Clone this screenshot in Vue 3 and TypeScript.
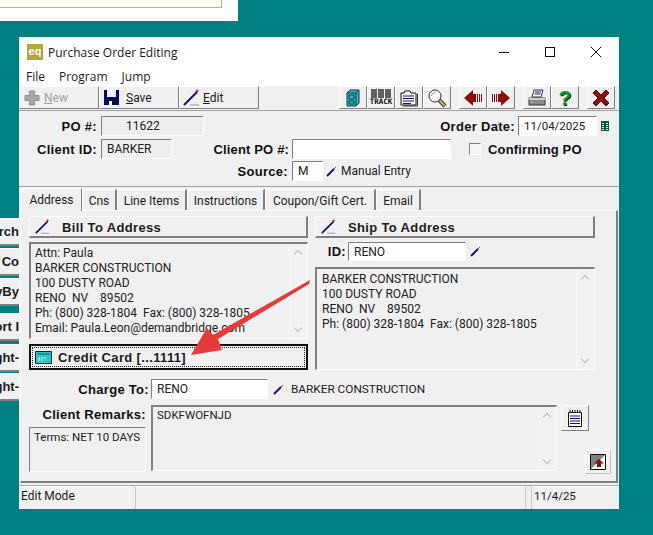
<script setup lang="ts">
const menus = ['File', 'Program', 'Jump']
const tabs = [
  { label: 'Address', width: 61 },
  { label: 'Cns', width: 35 },
  { label: 'Line Items', width: 70 },
  { label: 'Instructions', width: 78 },
  { label: 'Coupon/Gift Cert.', width: 111 },
  { label: 'Email', width: 45 },
]
const billTo = [
  'Attn: Paula',
  'BARKER CONSTRUCTION',
  '100 DUSTY ROAD',
  'RENO  NV    89502',
  'Ph: (800) 328-1804  Fax: (800) 328-1805',
  'Email: Paula.Leon@demandbridge.com',
]
const shipTo = billTo.slice(1, 5)
const sideButtons = [
  { label: 'rch', top: 218 },
  { label: '. Co', top: 248 },
  { label: 'yBy', top: 278 },
  { label: 'ort I', top: 313 },
  { label: 'ght-', top: 344 },
  { label: 'ght-', top: 373 },
]
</script>

<template>
  <div class="desktop">
    <div class="back-window"><div class="back-inner"></div></div>
    <div
      v-for="b in sideButtons"
      :key="b.top"
      class="side-btn"
      :style="{ top: b.top + 'px' }"
    ><span>{{ b.label }}</span></div>

    <div class="window">
      <div class="titlebar">
        <span class="app-icon">eq</span>
        <span class="title">Purchase Order Editing</span>
        <div class="win-controls">
          <svg width="12" height="12" viewBox="0 0 12 12"><path d="M1 6.500h10" stroke="#111" fill="none" /></svg>
          <svg width="12" height="12" viewBox="0 0 12 12"><rect x="1.500" y="1.500" width="9" height="9" stroke="#111" fill="none" /></svg>
          <svg width="12" height="12" viewBox="0 0 12 12"><path d="M1 1l10 10M11 1L1 11" stroke="#111" fill="none" /></svg>
        </div>
      </div>
      <div class="menubar">
        <span v-for="m in menus" :key="m">{{ m }}</span>
      </div>

      <div class="toolbar">
        <button class="tool wide disabled new-btn">
          <svg width="18" height="18" viewBox="0 0 18 18"><path d="M6.500 2h5v4.500H16v5h-4.500V16h-5v-4.500H2v-5h4.500z" fill="#a8a8a8" stroke="#8f8f8f" /></svg>
          <span><u>N</u>ew</span>
        </button>
        <button class="tool wide save-btn">
          <svg width="17" height="17" viewBox="0 0 17 17"><path d="M1 1h15v15H1z" fill="#06066e" /><path d="M4 1h9v7H4z" fill="#eef2ff" /><path d="M4 11h9v5H4z" fill="#111" /><path d="M6 12h3v4H6z" fill="#f4f4f4" /></svg>
          <span><u>S</u>ave</span>
        </button>
        <button class="tool wide edit-btn">
          <svg width="18" height="18" viewBox="0 0 18 18"><path d="M1 16L14 3" stroke="#1a1070" stroke-width="2" /><path d="M13 3l2-2" stroke="#c02030" stroke-width="2" /><path d="M7 16h9" stroke="#999" /></svg>
          <span><u>E</u>dit</span>
        </button>
        <div class="tool-spacer"></div>
        <button class="tool icon">
          <svg width="14" height="18" viewBox="0 0 14 18"><path d="M1 4l3-3h9v13l-3 3H1z" fill="#35b9c6" stroke="#073b44" /><path d="M3 6h5v4H3zM3 12h5v3H3zM10 17V4l3-3M1 4h9" fill="none" stroke="#073b44" /></svg>
        </button>
        <button class="tool icon">
          <svg class="barcode" width="20" height="9" viewBox="0 0 20 9"><path d="M1 0v9M3 0v9M5 0v9M8 0v9M10 0v9M12 0v9M15 0v9M17 0v9M19 0v9" stroke="#111" stroke-width="1.300" /></svg>
          <span class="track">TRACK</span>
        </button>
        <button class="tool icon">
          <svg width="20" height="18" viewBox="0 0 20 18"><path d="M2 4h3l1-2h5l1 2h5v12H2z" fill="#fff" stroke="#111" /><path d="M4 7h11M4 9.500h11M4 12h11M4 14.500h8" stroke="#101080" /><path d="M18.500 5v12H4" fill="none" stroke="#333" /></svg>
        </button>
        <button class="tool icon">
          <svg width="20" height="20" viewBox="0 0 20 20"><path d="M12 12l6 6" stroke="#333" stroke-width="4" /><path d="M12.500 12.500l5 5" stroke="#d8c84a" stroke-width="2" /><circle cx="8" cy="8" r="6" fill="#f6f6f6" stroke="#333" /><path d="M4.500 8c0-2 2-4 4-3.500" stroke="#999" fill="none" /></svg>
        </button>
        <button class="tool icon gap-left">
          <svg width="20" height="18" viewBox="0 0 20 18"><path d="M1 9l9-8v4h3v8h-3v4z" fill="#8b0d0d" /><path d="M14 5h1v8h-1zM16 5h1v8h-1zM18 5h1v8h-1z" fill="#8b0d0d" /></svg>
        </button>
        <button class="tool icon">
          <svg width="20" height="18" viewBox="0 0 20 18"><path d="M19 9l-9-8v4H7v8h3v4z" fill="#8b0d0d" /><path d="M1 5h1v8H1zM3 5h1v8H3zM5 5h1v8H5z" fill="#8b0d0d" /></svg>
        </button>
        <button class="tool icon gap-left">
          <svg width="20" height="18" viewBox="0 0 20 18"><path d="M7 1h9l-2 7H5z" fill="#fff" stroke="#333" /><path d="M8 3h6M7.500 5h6" stroke="#10107a" /><path d="M2 9h16v7H2z" fill="#8a8a8a" stroke="#333" /><path d="M2 9h16v2H2z" fill="#d0d0d0" /><path d="M3.500 13h3" stroke="#7ac060" stroke-width="2" /></svg>
        </button>
        <button class="tool icon">
          <span class="help">?</span>
        </button>
        <button class="tool icon gap-left">
          <svg width="18" height="18" viewBox="0 0 18 18"><path d="M1 4l3-3 5 5 5-5 3 3-5 5 5 5-3 3-5-5-5 5-3-3 5-5z" fill="#8b0d0d" stroke="#5a0808" /></svg>
        </button>
      </div>

      <div class="header-form">
        <div class="header-row">
          <label class="lbl po-label">PO #:</label>
          <div class="field readonly po-field">11622</div>
          <div class="grow"></div>
          <label class="lbl">Order Date:</label>
          <div class="field date-field">11/04/2025</div>
          <svg class="cal" width="8" height="10" viewBox="0 0 8 10"><path d="M0 0h8v10H0z" fill="#0a5a3a" /><path d="M1 2h2v1H1zM5 2h2v1H5zM1 4h2v1H1zM5 4h2v1H5zM1 6h2v1H1zM5 6h2v1H5zM1 8h2v1H1zM5 8h2v1H5z" fill="#d8f4e0" /></svg>
        </div>
        <div class="header-row second">
          <label class="lbl po-label">Client ID:</label>
          <div class="field readonly client-field">BARKER</div>
          <label class="lbl client-po-label">Client PO #:</label>
          <div class="field client-po-field"></div>
          <span class="check"></span>
          <span class="lbl confirm">Confirming PO</span>
        </div>
        <div class="header-row">
          <label class="lbl source-label">Source:</label>
          <div class="field source-field">M</div>
          <svg class="pen" width="11" height="11" viewBox="0 0 11 11"><path d="M1 10l7-7" stroke="#1a1070" stroke-width="2" /><path d="M8 3l2-2" stroke="#c02030" /></svg>
          <span class="plain">Manual Entry</span>
        </div>
      </div>

      <div class="tabs">
        <div
          v-for="(t, i) in tabs"
          :key="t.label"
          class="tab"
          :class="{ active: i === 0 }"
          :style="{ width: t.width + 'px' }"
        >{{ t.label }}</div>
      </div>

      <div class="pane">
        <div class="addresses">
          <div class="col">
            <button class="addr-btn">
              <svg width="16" height="16" viewBox="0 0 18 18"><path d="M1 16L14 3" stroke="#1a1070" stroke-width="2" /><path d="M13 3l2-2" stroke="#c02030" stroke-width="2" /><path d="M7 16h9" stroke="#999" /></svg>
              <span>Bill To Address</span>
            </button>
            <div class="text-box bill-box">
              <div class="lines">
                <div v-for="(l, i) in billTo" :key="i">{{ l }}</div>
              </div>
              <div class="scroll"><span class="up"></span><span class="down"></span></div>
            </div>
            <button class="card-btn">
              <span class="card-focus">
                <svg width="17" height="13" viewBox="0 0 17 13"><path d="M.5.5h16v12H.5z" fill="#2ec8c4" stroke="#222" /><path d="M2 3h13" stroke="#0a5a5a" /><path d="M3 7h2M6 7h2M9 7h2M3 9h2M6 9h2" stroke="#d8f4f0" /></svg>
                <span>Credit Card [...1111]</span>
              </span>
            </button>
          </div>
          <div class="col ship-col">
            <button class="addr-btn">
              <svg width="16" height="16" viewBox="0 0 18 18"><path d="M1 16L14 3" stroke="#1a1070" stroke-width="2" /><path d="M13 3l2-2" stroke="#c02030" stroke-width="2" /><path d="M7 16h9" stroke="#999" /></svg>
              <span>Ship To Address</span>
            </button>
            <div class="ship-id">
              <label class="lbl id-label">ID:</label>
              <div class="field id-field">RENO</div>
              <svg class="pen" width="11" height="11" viewBox="0 0 11 11"><path d="M1 10l7-7" stroke="#1a1070" stroke-width="2" /><path d="M8 3l2-2" stroke="#c02030" /></svg>
            </div>
            <div class="text-box ship-box">
              <div class="lines">
                <div v-for="(l, i) in shipTo" :key="i">{{ l }}</div>
              </div>
              <div class="scroll"><span class="up"></span><span class="down"></span></div>
            </div>
          </div>
        </div>

        <div class="charge-row">
          <label class="lbl charge-label">Charge To:</label>
          <div class="field charge-field">RENO</div>
          <svg class="pen" width="11" height="11" viewBox="0 0 11 11"><path d="M1 10l7-7" stroke="#1a1070" stroke-width="2" /><path d="M8 3l2-2" stroke="#c02030" /></svg>
          <span class="plain charge-name">BARKER CONSTRUCTION</span>
        </div>

        <div class="remarks-row">
          <div class="remarks-left">
            <label class="lbl remarks-label">Client Remarks:</label>
            <div class="terms">Terms: NET 10 DAYS</div>
          </div>
          <div class="text-box remarks-box">
            <div class="lines">SDKFWOFNJD</div>
            <div class="scroll"><span class="up"></span><span class="down"></span></div>
          </div>
          <div class="remarks-actions">
            <button class="note-btn">
              <svg width="16" height="18" viewBox="0 0 16 18"><path d="M1.500 3.500h13v14h-13z" fill="#fff" stroke="#111" /><path d="M3 1v3M5.500 1v3M8 1v3M10.500 1v3M13 1v3" stroke="#111" /><path d="M3 7h10M3 9.500h10M3 12h10M3 14.500h10" stroke="#10107a" /></svg>
            </button>
            <button class="flag-btn">
              <svg width="16" height="16" viewBox="0 0 16 16"><path d="M.5.5h15v15H.5z" fill="#fff" stroke="#111" /><path d="M1 1h14L1 15z" fill="#808080" /><path d="M9 5l5 4.500h-3V13H7V9.500H4z" fill="#8b0d0d" /></svg>
            </button>
          </div>
        </div>
      </div>

      <div class="statusbar">
        <div class="status-cell s1">Edit Mode</div>
        <div class="status-cell s2"></div>
        <div class="status-cell s3">11/4/25</div>
      </div>
    </div>

    <svg class="arrow" width="653" height="535" viewBox="0 0 653 535">
      <path d="M310 280L309 284 218 339 222 350 191 355 207 328 213 335z" fill="#e63a3a" />
    </svg>
  </div>
</template>

<style scoped>
.desktop {
  position: relative;
  width: 653px;
  height: 535px;
  background: #008080;
  overflow: hidden;
  font-family: Roboto, "Liberation Sans", sans-serif;
  font-size: 12px;
  color: #1c1c1c;
}

button {
  font-family: inherit;
  font-size: inherit;
  color: inherit;
  padding: 0;
  margin: 0;
}

.back-window {
  position: absolute;
  left: 0;
  top: 0;
  width: 238px;
  height: 21px;
  background: #fff;
}

.back-inner {
  width: 222px;
  height: 8px;
  background: #fffff4;
  border-right: 1px solid #b9b478;
  border-bottom: 1px solid #b9b478;
  box-sizing: border-box;
}

.side-btn {
  position: absolute;
  left: 0;
  width: 19px;
  height: 28px;
  box-sizing: border-box;
  background: #f0f0f0;
  border-top: 1px solid #fff;
  border-bottom: 2px solid #808080;
  font-family: "Liberation Sans", sans-serif;
  font-weight: 700;
  font-size: 13px;
  white-space: nowrap;
  overflow: hidden;
  display: flex;
  align-items: center;
  justify-content: flex-end;
}

.side-btn span {
  flex: none;
}

.window {
  position: absolute;
  left: 19px;
  top: 37px;
  width: 600px;
  height: 472px;
  box-sizing: border-box;
  background: #f0f0f0;
  display: flex;
  flex-direction: column;
}

.titlebar {
  height: 30px;
  background: #fff;
  display: flex;
  align-items: center;
  padding-left: 8px;
  flex: none;
  font-family: "Open Sans", sans-serif;
}

.app-icon {
  width: 16px;
  height: 16px;
  background: #b5a642;
  color: #fff;
  font-family: "Liberation Sans", sans-serif;
  font-size: 11px;
  font-weight: 700;
  line-height: 15px;
  text-align: center;
}

.title {
  margin-left: 5px;
  font-size: 12px;
}

.win-controls {
  margin-left: auto;
  display: flex;
  gap: 34px;
  padding-right: 17px;
}

.menubar {
  height: 19px;
  background: #fff;
  display: flex;
  gap: 14px;
  padding-left: 7px;
  line-height: 19px;
  flex: none;
  font-family: "Open Sans", sans-serif;
}

.toolbar {
  height: 25px;
  display: flex;
  flex: none;
  border-bottom: 1px solid #a0a0a0;
  box-sizing: border-box;
  padding-bottom: 1px;
}

.tool {
  background: #f0f0f0;
  border: 1px solid;
  border-color: #fff #808080 #808080 #fff;
  height: 23px;
  display: flex;
  align-items: center;
  box-sizing: border-box;
}

.tool.wide {
  width: 80px;
  padding-left: 3px;
  font-size: 12px;
}

.new-btn {
  gap: 3px;
}

.save-btn {
  gap: 6px;
}

.edit-btn {
  gap: 2px;
}

.tool.icon {
  width: 28px;
  justify-content: center;
  flex-direction: column;
}

.tool.gap-left {
  margin-left: 8px;
}

.tool.disabled {
  color: #a0a0a0;
}

.tool-spacer {
  width: 80px;
  flex: none;
}

.barcode {
  display: block;
}

.track {
  font-family: "DejaVu Sans Mono", monospace;
  font-size: 7.500px;
  font-weight: 700;
  line-height: 8px;
  color: #111;
}

.help {
  font-family: "Liberation Sans", sans-serif;
  font-size: 21px;
  font-weight: 700;
  color: #0f9a2c;
  line-height: 20px;
  text-shadow: 1px 1px 0 #222;
}

.header-form {
  height: 75px;
  flex: none;
  padding-top: 5px;
  box-sizing: border-box;
  display: flex;
  flex-direction: column;
  gap: 2px;
}

.header-row {
  display: flex;
  align-items: center;
  height: 20px;
  flex: none;
}

.header-row.second {
  margin-top: 1px;
}

.grow {
  flex: 1;
}

.lbl {
  font-family: "Liberation Sans", sans-serif;
  font-weight: 700;
  font-size: 13px;
  letter-spacing: 0.3px;
  color: #111;
  white-space: nowrap;
}

.po-label {
  width: 78px;
  text-align: right;
  margin-right: 4px;
}

.field {
  height: 20px;
  box-sizing: border-box;
  border: 1px solid;
  border-color: #808080 #fff #fff #808080;
  background: #fff;
  line-height: 18px;
  padding-left: 5px;
  color: #222;
  white-space: nowrap;
}

.field.readonly {
  background: #eeeeee;
}

.po-field {
  width: 103px;
  padding-left: 24px;
}

.client-field {
  width: 71px;
}

.date-field {
  width: 79px;
  margin-left: 3px;
  font-size: 11.500px;
}

.cal {
  margin: 0 10px 0 4px;
}

.client-po-label {
  width: 117px;
  text-align: right;
  margin-right: 3px;
  letter-spacing: 0.15px;
}

.client-po-field {
  width: 159px;
}

.check {
  width: 12px;
  height: 12px;
  margin-left: 18px;
  box-sizing: border-box;
  border: 1px solid;
  border-color: #808080 #fff #fff #808080;
  background: #f6f6f6;
}

.confirm {
  margin-left: 7px;
  letter-spacing: 0.15px;
}

.source-label {
  width: 269px;
  text-align: right;
  margin-right: 4px;
}

.source-field {
  width: 31px;
}

.pen {
  margin-left: 3px;
  flex: none;
}

.plain {
  margin-left: 4px;
  white-space: nowrap;
}

.tabs {
  display: flex;
  flex: none;
  height: 24px;
  padding-left: 2px;
  border-top: 1px solid #a0a0a0;
  box-sizing: border-box;
  align-items: flex-end;
}

.tab {
  height: 21px;
  line-height: 22px;
  text-align: center;
  box-sizing: border-box;
  border-top: 1px solid #fff;
  border-left: 1px solid #fff;
  border-right: 2px solid #808080;
  white-space: nowrap;
}

.tab.active {
  height: 23px;
  line-height: 22px;
  position: relative;
  z-index: 1;
  margin-bottom: -1px;
  background: #f0f0f0;
  border-right: 1px solid #808080;
}

.pane {
  flex: none;
  height: 273px;
  box-sizing: border-box;
  margin-left: 1px;
  width: 598px;
  border-top: 1px solid #fff;
  border-right: 2px solid #808080;
  border-bottom: 2px solid #808080;
  border-left: 1px solid #fff;
  padding: 5px 0 0 8px;
}

.addresses {
  display: flex;
  height: 155px;
  flex: none;
}

.col {
  width: 279px;
  display: flex;
  flex-direction: column;
  flex: none;
}

.ship-col {
  margin-left: 7px;
  width: 280px;
}

.addr-btn {
  height: 22px;
  background: #f0f0f0;
  border: 1px solid;
  border-color: #fff #808080 #808080 #fff;
  border-width: 1px 2px 2px 1px;
  display: flex;
  align-items: center;
  gap: 11px;
  padding: 1px 0 0 5px;
  box-sizing: border-box;
  font-family: "Liberation Sans", sans-serif;
  font-weight: 700;
  font-size: 13px;
  letter-spacing: 0.35px;
  flex: none;
}

.text-box {
  box-sizing: border-box;
  border: 1px solid;
  border-width: 2px 1px 1px 2px;
  border-color: #808080 #fff #fff #808080;
  display: flex;
  color: #222;
}

.lines {
  flex: 1;
  padding: 2px 4px;
  line-height: 15px;
  white-space: pre;
  overflow: hidden;
}

.bill-box {
  height: 97px;
  margin-top: 4px;
  flex: none;
}

.ship-box {
  height: 103px;
  margin-top: 6px;
  flex: none;
}

.ship-box .lines {
  padding: 3px 5px;
}

.scroll {
  width: 17px;
  flex: none;
  position: relative;
  background: #f2f2f2;
  border-left: 1px solid #f8f8f8;
}

.up,
.down {
  position: absolute;
  left: 5px;
  width: 5px;
  height: 5px;
  border-left: 1px solid #b8b8b8;
  border-top: 1px solid #b8b8b8;
  transform: rotate(45deg);
}

.up {
  top: 7px;
}

.down {
  bottom: 7px;
  transform: rotate(225deg);
}

.card-btn {
  height: 26px;
  margin-top: 5px;
  background: #f0f0f0;
  border: 2px solid #111;
  padding: 1px;
  flex: none;
  box-sizing: border-box;
}

.card-focus {
  display: flex;
  align-items: center;
  gap: 6px;
  height: 100%;
  padding-left: 2px;
  box-sizing: border-box;
  border: 1px dotted #222;
  font-family: "Liberation Sans", sans-serif;
  font-weight: 700;
  font-size: 13px;
  letter-spacing: 0.35px;
}

.ship-id {
  display: flex;
  align-items: center;
  height: 19px;
  margin-top: 4px;
  flex: none;
}

.id-label {
  width: 31px;
  text-align: right;
  margin-right: 2px;
}

.id-field {
  width: 118px;
  height: 19px;
  line-height: 19px;
}

.ship-id .pen {
  margin-left: 4px;
}

.charge-row {
  display: flex;
  align-items: center;
  height: 20px;
  margin-top: 8px;
}

.charge-label {
  width: 120px;
  text-align: right;
  margin-right: 2px;
}

.charge-field {
  width: 117px;
}

.charge-row .pen {
  margin-left: 5px;
}

.charge-name {
  margin-left: 7px;
  font-size: 11.800px;
}

.remarks-row {
  display: flex;
  margin-top: 6px;
  height: 70px;
}

.remarks-left {
  width: 117px;
  margin-right: 5px;
  flex: none;
  display: flex;
  flex-direction: column;
  text-align: right;
}

.remarks-label {
  margin-top: 2px;
  line-height: 15px;
}

.terms {
  margin-top: 5px;
  height: 45px;
  text-align: left;
  white-space: nowrap;
  box-sizing: border-box;
  border: 1px solid;
  border-color: #808080 #fff #fff #808080;
  padding: 2px 4px;
  font-size: 11.500px;
}

.remarks-box {
  width: 406px;
  height: 66px;
  flex: none;
  font-size: 11.500px;
}

.remarks-box .lines {
  padding-top: 1px;
}

.remarks-actions {
  flex: 1;
  position: relative;
}

.note-btn,
.flag-btn {
  position: absolute;
  background: #f0f0f0;
  border: 1px solid;
  border-color: #fff #808080 #808080 #fff;
  display: flex;
  align-items: center;
  justify-content: center;
  box-sizing: border-box;
}

.note-btn {
  left: 4px;
  top: 0;
  width: 28px;
  height: 26px;
}

.flag-btn {
  left: 28px;
  top: 44px;
  width: 26px;
  height: 25px;
  border-color: #fff #c0c0c0 #c0c0c0 #fff;
}

.statusbar {
  flex: 1;
  display: flex;
  margin-top: 2px;
  border-top: 1px solid #a8a8a8;
  line-height: 18px;
}

.status-cell {
  box-sizing: border-box;
  border-top: 1px solid #fff;
  padding-left: 2px;
  margin-right: 5px;
}

.s1 {
  width: 111px;
  border-right: 1px solid #fff;
}

.s2 {
  width: 391px;
  border-left: 1px solid #c8c8c8;
  border-right: 1px solid #c8c8c8;
}

.s3 {
  flex: 1;
  margin-right: 0;
  border-left: 1px solid #c8c8c8;
  font-size: 11.500px;
}

.arrow {
  position: absolute;
  left: 0;
  top: 0;
  pointer-events: none;
}
</style>
